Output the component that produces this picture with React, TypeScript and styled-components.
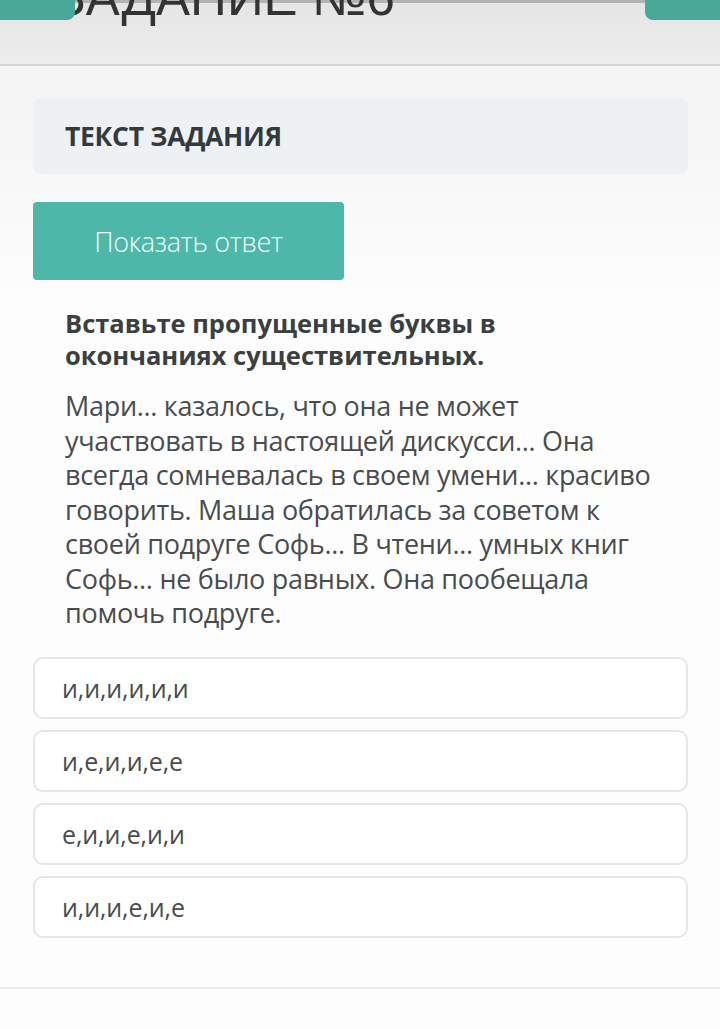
import styled, { createGlobalStyle } from 'styled-components';

const GlobalStyle = createGlobalStyle`
  html, body {
    margin: 0;
    padding: 0;
    background: #fdfdfd;
  }

  body {
    font-family: 'Open Sans', 'Noto Sans', sans-serif;
    color: #444;
  }

  * {
    box-sizing: border-box;
  }
`;

const Page = styled.div`
  width: 720px;
  min-height: 1029px;

  display: flex;
  flex-direction: column;

  background: linear-gradient(180deg, #f2f2f2 0px, #f7f7f7 160px, #fdfdfd 300px);
`;

const Header = styled.header`
  height: 66px;

  overflow: hidden;

  background: linear-gradient(180deg, #e5e5e5 0%, #ededed 100%);
  border-bottom: 2px solid #d6d6d6;
`;

const HeaderRow = styled.div`
  margin-top: -33px;

  display: flex;
  align-items: flex-start;
`;

const TopStrip = styled.div`
  height: 3px;
  margin: 0 75px;

  background: #b3b3b3;
`;

const CornerButton = styled.div<{ $side: 'left' | 'right' }>`
  width: 75px;
  height: 50px;

  position: relative;
  z-index: 1;

  flex-shrink: 0;

  background: #48a999;
  border-radius: ${(p) => (p.$side === 'left' ? '0 0 8px 0' : '0 0 0 8px')};
`;

const Title = styled.h1`
  margin: 0 0 0 -20px;
  padding-top: 3px;

  flex: 1;

  font-family: 'Liberation Sans', Arial, sans-serif;
  font-size: 51px;
  font-weight: 400;
  line-height: 50px;
  letter-spacing: 0;

  color: #333;
  white-space: nowrap;
`;

const Main = styled.main`
  padding: 32px 32px 0 33px;

  display: flex;
  flex-direction: column;
`;

const TaskCard = styled.div`
  height: 76px;

  padding-left: 32px;

  display: flex;
  align-items: center;

  background: #eef1f3;
  border-radius: 8px;
`;

const TaskHeading = styled.h2`
  margin: 0;

  font-size: 26.5px;
  font-weight: 700;
  letter-spacing: -0.3px;

  color: #333a3d;
`;

const ShowButton = styled.button`
  width: 311px;
  height: 78px;
  margin-top: 28px;

  display: flex;
  align-items: center;
  justify-content: center;

  font-family: 'Open Sans', sans-serif;
  font-size: 27px;
  font-weight: 300;
  letter-spacing: -0.3px;

  color: #f4fbfa;
  background: #4db7a9;
  border: none;
  border-radius: 4px;
`;

const Question = styled.div`
  padding: 27px 23px 0 32px;
`;

const Instruction = styled.p`
  max-width: 540px;
  margin: 0;

  font-size: 25.5px;
  font-weight: 700;
  line-height: 32px;

  color: #3a3f42;
`;

const Passage = styled.p`
  margin: 18px 0 0;

  font-size: 27px;
  line-height: 34.5px;
  letter-spacing: -0.3px;

  color: #484c4e;
`;

const Options = styled.div`
  margin-top: 26px;

  display: flex;
  flex-direction: column;
  gap: 11px;
`;

const Option = styled.div`
  height: 62px;

  padding-left: 27px;

  display: flex;
  align-items: center;

  font-size: 25px;
  letter-spacing: -0.1px;

  color: #484c4e;
  background: #fff;
  border: 2px solid #e4e6e7;
  border-radius: 10px;
`;

const Footer = styled.div`
  height: 40px;
  margin-top: 49px;

  border-top: 2px solid #ececec;
  background: #fdfdfd;
`;

const options = ['и,и,и,и,и,и', 'и,е,и,и,е,е', 'е,и,и,е,и,и', 'и,и,и,е,и,е'];

export default function App() {
  return (
    <>
      <GlobalStyle />
      <Page>
        <Header>
          <TopStrip />
          <HeaderRow>
            <CornerButton $side="left" />
            <Title>ЗАДАНИЕ №6</Title>
            <CornerButton $side="right" />
          </HeaderRow>
        </Header>
        <Main>
          <TaskCard>
            <TaskHeading>ТЕКСТ ЗАДАНИЯ</TaskHeading>
          </TaskCard>
          <ShowButton>Показать ответ</ShowButton>
          <Question>
            <Instruction>
              Вставьте пропущенные буквы в окончаниях существительных.
            </Instruction>
            <Passage>
              Мари... казалось, что она не может участвовать в настоящей
              дискусси... Она всегда сомневалась в своем умени... красиво
              говорить. Маша обратилась за советом к своей подруге Софь... В
              чтени... умных книг Софь... не было равных. Она пообещала помочь
              подруге.
            </Passage>
          </Question>
          <Options>
            {options.map((o) => (
              <Option key={o}>{o}</Option>
            ))}
          </Options>
        </Main>
        <Footer />
      </Page>
    </>
  );
}
